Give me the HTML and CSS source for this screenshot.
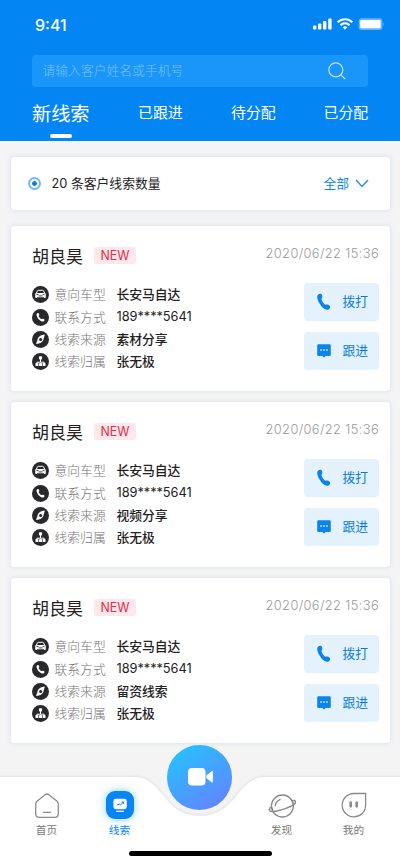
FILE: index.html
```html
<!DOCTYPE html>
<html lang="zh-CN">
<head>
<meta charset="utf-8">
<title>线索</title>
<link rel="stylesheet" href="styles.css">
</head>
<body>
<svg class="defs" width="0" height="0" aria-hidden="true">
  <defs>
    <symbol id="car" viewBox="0 0 17 17"><circle cx="8.5" cy="8.5" r="8.5" fill="#28282a"/><path d="M4.400 7.300 5.300 5q.25-.7 1-.7h4.400q.75 0 1 .7l.9 2.300" fill="none" stroke="#fff" stroke-width="1"/><path d="M3.200 8.200Q3.200 7 4.500 7h8q1.300 0 1.300 1.200v3.100q0 .7-.7.7h-.7q-.5 0-.6-.8H5.200q-.1.800-.6.800h-.7q-.7 0-.7-.7z" fill="#fff"/><path d="M4.500 8.600h1.900M10.600 8.600h1.900M6.500 9.900h4" stroke="#28282a" stroke-width=".9"/></symbol>
    <symbol id="tel" viewBox="0 0 17 17"><circle cx="8.5" cy="8.5" r="8.5" fill="#28282a"/><path d="M5.2 4.2c.8-.6 1.4-.2 1.8.6.4.8.5 1.3-.1 1.8-.5.4.1 1.4.8 2.2.8.9 1.8 1.6 2.3 1.2.6-.5 1-.4 1.8.1.9.6 1.1 1.1.4 1.8-1.2 1.2-3.4.4-5.3-1.500S3.700 5.400 5.200 4.200z" fill="#fff"/></symbol>
    <symbol id="source" viewBox="0 0 17 17"><circle cx="8.500" cy="8.500" r="8.500" fill="#28282a"/><path d="M12.900 3.600c-4 .5-7.200 2.200-7.500 5.700L4 12.900c4.200-.4 7.400-2 7.700-5.500z" fill="#fff"/><circle cx="8.600" cy="8.500" r="1.500" fill="#28282a"/></symbol>
    <symbol id="owner" viewBox="0 0 17 17"><circle cx="8.500" cy="8.500" r="8.500" fill="#28282a"/><path d="M8.500 6v3.200M4.900 11V9.200h7.200V11" fill="none" stroke="#fff" stroke-width="1"/><g fill="#fff"><rect x="6.900" y="3.300" width="3.200" height="3.200" rx=".8"/><rect x="3.500" y="10" width="2.900" height="3" rx=".6"/><rect x="7.050" y="10" width="2.900" height="3" rx=".6"/><rect x="10.600" y="10" width="2.900" height="3" rx=".6"/></g></symbol>
    <symbol id="call" viewBox="0 0 14 18"><path d="M1.200 1.600C2.700.2 4.500.5 5 1.900c.5 1.300.5 2.200-.1 3-.8 1 .1 3.100 1.200 4.700 1.100 1.500 2.300 2.500 3.400 2 1-.4 1.800-.2 2.900.9 1.100 1.200 1.100 2.200-.2 3.400-2.500 2.200-6.300.1-9-4.300S-.9 3.500 1.200 1.600z" fill="#0c83ea"/></symbol>
    <symbol id="chat" viewBox="0 0 14 14"><path d="M1.500.3h11q1.300 0 1.300 1.300v9.200q0 1.300-1.300 1.300H8.600L7 13.700l-1.600-1.600H1.500Q.2 12.100.2 10.800V1.600Q.2.300 1.500.3z" fill="#0c83ea"/><path d="M3.300 5.200h1.600v1.600H3.300zM6.200 5.200h1.600v1.600H6.200zM9.100 5.200h1.600v1.600H9.100z" fill="#e4f2fe"/></symbol>
  </defs>
</svg>
<div class="phone">
  <header class="header">
    <div class="status">
      <span class="time">9:41</span>
      <svg width="72" height="14" viewBox="0 0 72 14">
        <g fill="#fff"><rect y="8.500" width="3.400" height="4" rx="1"/><rect x="5" y="6.500" width="3.400" height="6" rx="1"/><rect x="10" y="4" width="3.400" height="8.500" rx="1"/><rect x="15.200" y="1.500" width="3.400" height="11" rx="1"/></g>
        <g fill="none" stroke="#fff" stroke-width="2"><path d="M24.600 5.200a10.500 10.500 0 0 1 14.800 0"/><path d="M27.400 8.200a6.600 6.600 0 0 1 9.200 0"/></g>
        <path d="M29.600 10.300a3.500 3.500 0 0 1 4.800 0L32 12.700z" fill="#fff"/>
        <rect x="45.700" y="1.200" width="23.600" height="11.800" rx="3" fill="#fff" fill-opacity=".4"/>
        <rect x="47.200" y="2.900" width="20.400" height="8.400" rx="1.200" fill="#fff"/>
        <path d="M70.400 5.300q1.200 1.800 0 3.600z" fill="#fff" fill-opacity=".6"/>
      </svg>
    </div>
    <div class="search">
      <span>请输入客户姓名或手机号</span>
      <svg width="18" height="18" viewBox="0 0 18 18" fill="none" stroke="#c3e3ff" stroke-width="1.200"><circle cx="7.800" cy="7.800" r="7"/><path d="m12.800 12.800 4.400 4.400"/></svg>
    </div>
    <nav class="tabs">
      <span class="tab active">新线索</span><span class="tab">已跟进</span><span class="tab">待分配</span><span class="tab">已分配</span>
    </nav>
  </header>
  <main class="content">
    <section class="summary">
      <span class="dot"></span>
      <span class="count">20 条客户线索数量</span>
      <span class="filter">全部</span>
      <svg width="14" height="9" viewBox="0 0 14 9" fill="none" stroke="#2290ee" stroke-width="1.400"><path d="m1 1 6 6.400L13 1"/></svg>
    </section>
    <article class="lead">
      <div class="lead-head"><h2>胡良昊</h2><span class="badge">NEW</span><time>2020/06/22 15:36</time></div>
      <div class="lead-body">
        <dl>
          <div><svg><use href="#car"/></svg><dt>意向车型</dt><dd>长安马自达</dd></div>
          <div><svg><use href="#tel"/></svg><dt>联系方式</dt><dd class="num">189****5641</dd></div>
          <div><svg><use href="#source"/></svg><dt>线索来源</dt><dd>素材分享</dd></div>
          <div><svg><use href="#owner"/></svg><dt>线索归属</dt><dd>张无极</dd></div>
        </dl>
        <div class="actions">
          <button><svg class="call"><use href="#call"/></svg><span>拨打</span></button>
          <button><svg class="chat"><use href="#chat"/></svg><span>跟进</span></button>
        </div>
      </div>
    </article>
    <article class="lead">
      <div class="lead-head"><h2>胡良昊</h2><span class="badge">NEW</span><time>2020/06/22 15:36</time></div>
      <div class="lead-body">
        <dl>
          <div><svg><use href="#car"/></svg><dt>意向车型</dt><dd>长安马自达</dd></div>
          <div><svg><use href="#tel"/></svg><dt>联系方式</dt><dd class="num">189****5641</dd></div>
          <div><svg><use href="#source"/></svg><dt>线索来源</dt><dd>视频分享</dd></div>
          <div><svg><use href="#owner"/></svg><dt>线索归属</dt><dd>张无极</dd></div>
        </dl>
        <div class="actions">
          <button><svg class="call"><use href="#call"/></svg><span>拨打</span></button>
          <button><svg class="chat"><use href="#chat"/></svg><span>跟进</span></button>
        </div>
      </div>
    </article>
    <article class="lead">
      <div class="lead-head"><h2>胡良昊</h2><span class="badge">NEW</span><time>2020/06/22 15:36</time></div>
      <div class="lead-body">
        <dl>
          <div><svg><use href="#car"/></svg><dt>意向车型</dt><dd>长安马自达</dd></div>
          <div><svg><use href="#tel"/></svg><dt>联系方式</dt><dd class="num">189****5641</dd></div>
          <div><svg><use href="#source"/></svg><dt>线索来源</dt><dd>留资线索</dd></div>
          <div><svg><use href="#owner"/></svg><dt>线索归属</dt><dd>张无极</dd></div>
        </dl>
        <div class="actions">
          <button><svg class="call"><use href="#call"/></svg><span>拨打</span></button>
          <button><svg class="chat"><use href="#chat"/></svg><span>跟进</span></button>
        </div>
      </div>
    </article>
  </main>
  <footer class="tabbar">
    <svg class="bar-shape" width="400" height="89" viewBox="0 0 400 89"><path d="M0 0H134C151 0 158 13 167 23C176 34 187 39 200 39S223 34 233 23C242 13 249 0 266 0H400V89H0z" fill="#fff"/></svg>
    <div class="record"><svg width="26" height="18" viewBox="0 0 26 18" fill="#fff"><rect width="17.500" height="17.500" rx="4"/><path d="m18.300 7.600 5.300-4.400q1.200-.9 1.200.6v9.900q0 1.500-1.200.6l-5.300-4.400z"/></svg></div>
    <nav class="items">
      <a class="item"><svg width="28" height="28" viewBox="0 0 28 28" fill="none" stroke="#8b8b8b" stroke-width="1.300"><path d="M11.800 2.900q2.200-1.800 4.400 0l7.600 6.200q1.500 1.200 1.500 3v9.600q0 3.600-3.600 3.600H6.300q-3.600 0-3.600-3.600v-9.600q0-1.800 1.500-3z"/><path d="M10 20.400h8.200"/></svg><span>首页</span></a>
      <a class="item on"><span class="tile"><svg width="28" height="28" viewBox="0 0 28 28"><rect x="7.400" y="7.800" width="13.400" height="10.400" rx="2.400" fill="#fff"/><path d="M10.200 20.300h7.600" stroke="#fff" stroke-width="1.200"/><path d="m11 14 2.300-.8 1.400.5 2.500-2.300M15.500 11h2v1.800" fill="none" stroke="#0785f2"/></svg></span><span>线索</span></a>
      <span></span>
      <a class="item"><svg width="28" height="28" viewBox="0 0 28 28" fill="none" stroke="#8b8b8b" stroke-width="1.300"><circle cx="14.400" cy="14" r="11"/><path d="M7.200 14.500c0-3.700 2.200-6 5.400-7.200"/><path d="M3.500 14.900C1 16.100.5 18.700 2.700 19.200c3.500.7 8.900-.6 13.900-2.300 5-1.700 9.800-4 10.900-5.900.9-2-1-3.100-3.300-2.300" stroke-width="1.500"/><path d="M3.400 14.800 5 18.600M24 8.500l1.300 3.600"/></svg><span>发现</span></a>
      <a class="item"><svg width="28" height="28" viewBox="0 0 28 28" fill="none" stroke="#8b8b8b" stroke-width="1.300"><path d="M14 1.500h11.600v12.200A11.700 11.700 0 1 1 14 1.500z"/><path d="M10.700 10.700v3.600M16.700 10.700v3.600" stroke-width="2.700" stroke-linecap="round"/></svg><span>我的</span></a>
    </nav>
    <div class="home-line"></div>
  </footer>
</div>
</body>
</html>
```
FILE: styles.css
```css
* { box-sizing: border-box; }
body { margin: 0; font-family: "Liberation Sans", "Noto Sans CJK SC", sans-serif; font-size: 12.8px; color: #222; }
.defs { position: absolute; }
.phone { width: 400px; height: 866px; overflow: hidden; background: #f4f4f5; display: flex; flex-direction: column; }
.header { flex: none; height: 140.5px; background: #0386f4; padding: 17px 32px 0; }
.status { display: flex; justify-content: space-between; align-items: flex-start; height: 37.5px; margin-right: -17px; color: #fff; }
.status .time { font-family: Inter, sans-serif; font-weight: 500; font-size: 16px; line-height: 16px; padding-left: 3px; }
.search { height: 32px; border-radius: 4px; background: #1a96fa; display: flex; align-items: center; justify-content: space-between; padding: 0 22.500px 0 10.5px; color: #7bc2fc; font-weight: 300; }
.search span { padding-bottom: 2px; }
.tabs { display: grid; grid-template-columns: 106px 93px 92.500px 1fr; height: 54px; color: #fff; }
.tab { font-size: 14.9px; line-height: 52px; white-space: nowrap; }
.tab.active { font-size: 19.2px; line-height: 55px; position: relative; }
.tab.active::after { content: ""; position: absolute; left: 18px; bottom: 4px; width: 22px; height: 3.500px; border-radius: 2px; background: #fff; }
.content { flex: 1; min-height: 0; padding: 16.500px 10.500px 0; }
.summary, .lead { background: #fff; border-radius: 4px; box-shadow: 0 0 5px rgba(190, 205, 235, .6); }
.summary { height: 53px; margin-bottom: 16px; display: flex; align-items: center; padding: 0 21px 0 17px; }
.dot { width: 13px; height: 13px; border: 2px solid #76b8f5; border-radius: 50%; background: radial-gradient(circle, #087fe5 0 2px, #fff 2.700px); margin-right: 11px; }
.count { font-family: Inter, "Noto Sans CJK SC", sans-serif; padding-bottom: 2px; }
.filter { margin-left: auto; margin-right: 5.500px; color: #0d85ed; padding-bottom: 2px; }
.lead { height: 165px; margin-bottom: 11px; padding: 19px 10.500px 0 21.500px; }
.lead-head { display: flex; height: 22px; align-items: center; }
h2 { margin: 0; font-size: 17px; font-weight: 400; line-height: 22px; padding-top: 4px; }
.badge { margin: 0 0 1px 11px; width: 42px; height: 17px; border-radius: 2px; background: #ffe8eb; color: #e52c48; text-align: center; font: 12.400px/17px Inter, sans-serif; }
time { margin-left: auto; font-family: Inter, sans-serif; font-weight: 300; font-size: 12.800px; color: #999; letter-spacing: .4px; padding-bottom: 5px; }
.lead-body { display: flex; justify-content: space-between; align-items: flex-start; padding-top: 15.500px; }
dl { margin: 1px 0 0; display: grid; grid-auto-rows: 22.400px; }
dl div { display: flex; align-items: center; }
dl svg { width: 17px; height: 17px; margin-right: 5.500px; }
dt { width: 62px; color: #777; font-weight: 300; padding-bottom: 2px; }
dd { margin: 0; font-family: Inter, "Noto Sans CJK SC", sans-serif; font-weight: 500; padding-bottom: 2px; letter-spacing: -.05px; }
dd.num { font-weight: 400; }
.actions { display: grid; gap: 10.500px; }
button { width: 75px; height: 38.500px; border: 0; border-radius: 4px; background: #e4f2fe; color: #0c7de0; font: inherit; padding: 0 11px 0 13px; display: flex; align-items: center; justify-content: space-between; }
button span { padding-bottom: 2px; }
.call { width: 14px; height: 18px; }
.chat { width: 14px; height: 14px; }
.tabbar { flex: none; height: 89px; position: relative; }
.bar-shape { position: absolute; inset: 0; filter: drop-shadow(0 -1px 1.500px rgba(120, 120, 130, .15)); }
.record { position: absolute; left: 167px; top: -32px; width: 64.500px; height: 64.500px; border-radius: 50%; background: linear-gradient(145deg, #28bfff 12%, #6384ff 90%); display: flex; align-items: center; justify-content: center; padding-left: 3px; }
.items { position: relative; display: grid; grid-template-columns: 73px 73px 89px 73px 71px; padding: 15px 11px 0 10px; }
.item { display: flex; flex-direction: column; align-items: center; font-size: 10.700px; line-height: 16px; color: #777; gap: 2px; }
.tile { width: 28px; height: 28px; border-radius: 9px; background: #0785f2; box-shadow: 0 0 8px rgba(55, 175, 255, .6); position: relative; top: -1px; }
.on { color: #0785f2; }
.home-line { position: absolute; left: 129px; top: 73.500px; width: 143px; height: 5.500px; border-radius: 3px; background: #000; }
```
